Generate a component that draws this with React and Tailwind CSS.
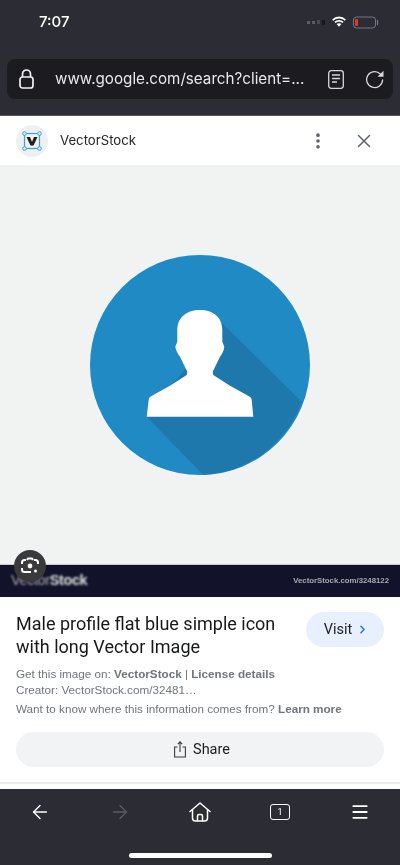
import { ArrowLeft, ArrowRight, ChevronRight, Menu, MoreVertical, X } from "lucide-react";

function BatteryIcon() {
  return (
    <svg width="26" height="13" viewBox="0 0 26 13" fill="none">
      <rect x="0.5" y="1" width="22" height="11" rx="3" stroke="#77777c" />
      <rect x="2" y="3" width="3" height="7" rx="1" fill="#e8352c" />
      <path d="M24.5 4.500v4" stroke="#77777c" strokeWidth="1.200" strokeLinecap="round" />
    </svg>
  );
}

function WifiIcon() {
  return (
    <svg width="16" height="12" viewBox="0 0 16 12" fill="white">
      <path d="M8 2.400c2.200 0 4.200.9 5.700 2.300l1.200-1.300A10 10 0 0 0 8 .6a10 10 0 0 0-6.900 2.800l1.200 1.300A8.200 8.200 0 0 1 8 2.400z" />
      <path d="M8 5.700c1.300 0 2.500.5 3.400 1.300l1.200-1.300A6.700 6.700 0 0 0 8 3.900a6.700 6.700 0 0 0-4.600 1.800L4.600 7c.9-.8 2.100-1.300 3.400-1.300z" />
      <path d="M8 7.200c-1 0-1.800.4-2.400.9L8 10.800l2.400-2.700c-.6-.5-1.400-.9-2.400-.9z" />
    </svg>
  );
}

function LockIcon() {
  return (
    <svg width="15" height="20" viewBox="0 0 15 20" fill="none" stroke="#f0f0f0" strokeWidth="1.700">
      <rect x="1" y="8" width="13" height="11" rx="2.500" />
      <path d="M3.500 8V5a4 4 0 0 1 8 0v3" />
    </svg>
  );
}

function ReaderIcon() {
  return (
    <svg width="16" height="19" viewBox="0 0 16 19" fill="none" stroke="#d8d8da" strokeWidth="1.300">
      <rect x="0.7" y="0.7" width="14.600" height="17.600" rx="2.500" />
      <path d="M4 5h8M4 8.500h8M4 12h5" />
    </svg>
  );
}

function ReloadIcon() {
  return (
    <svg width="20" height="19" viewBox="0 0 20 19" fill="none">
      <path d="M15.500 4.200A8 8 0 1 0 17.600 10" stroke="#d8d8da" strokeWidth="1.300" strokeLinecap="round" />
      <path d="M18.500 0.800v6h-6z" fill="#d8d8da" />
    </svg>
  );
}

function VectorStockLogo() {
  return (
    <svg width="32" height="32" viewBox="0 0 32 32" fill="none">
      <circle cx="16" cy="16" r="16" fill="#eef1f1" />
      <rect x="8.500" y="8.500" width="15" height="15" stroke="#3aa0d8" strokeWidth="1.200" />
      <path d="M10.500 12h3.500l2 5 2-5h3.500l-4 8.500h-3z" fill="#1c1c1c" />
      {[[8.5, 8.5], [23.5, 8.5], [8.5, 23.5], [23.5, 23.5]].map(([x, y]) => (
        <circle key={`${x}-${y}`} cx={x} cy={y} r="1.800" fill="#dff0fa" stroke="#3aa0d8" strokeWidth="1" />
      ))}
    </svg>
  );
}

function ProfileImage() {
  return (
    <svg width="220" height="220" viewBox="0 0 220 220">
      <circle cx="110" cy="110" r="110" fill="#1f8ac4" />
      <path d="M132 68L211.700 146.700A110 110 0 0 1 113.300 219.900L56.700 161.700Z" fill="#1f78ab" />
      <path
        d="M110 55C97 55 87.300 62 87.300 75L87.300 86.700L85.300 91.700C86 96 88 99 90 101.700L97.300 116.700L96.700 120L80 130.700L63.300 140C60 141.500 58.700 143 58.700 145L56.700 161.700L163.300 161.700L161.700 145C161.700 143 160 141.500 156.700 140L140 130.700L123.300 120L122.700 116.700L130 101.700C132 99 134 96 134.300 91.700L132.300 86.700L132.300 75C132.300 62 123 55 110 55Z"
        fill="white"
      />
    </svg>
  );
}

function LensIcon() {
  return (
    <svg width="20" height="20" viewBox="0 0 20 20" fill="none">
      <path d="M6 4H4.500A2.500 2.500 0 0 0 2 6.500V8M14 4h1.500A2.500 2.500 0 0 1 18 6.500V8M2 12v1.500A2.500 2.500 0 0 0 4.500 16H11" stroke="white" strokeWidth="2" />
      <path d="M7 4l1-1.500h4L13 4" stroke="white" strokeWidth="2" />
      <circle cx="10" cy="10" r="2.400" fill="white" />
      <circle cx="15.500" cy="15" r="1.500" fill="white" />
    </svg>
  );
}

function ShareIcon() {
  return (
    <svg width="12" height="17" viewBox="0 0 12 17" fill="none" stroke="#3a3b3e" strokeWidth="1.100">
      <path d="M3.500 6H.6v10h10.800V6H8.500" />
      <path d="M6 11V1M3.800 3.200L6 .8l2.200 2.400" />
    </svg>
  );
}

function HomeIcon() {
  return (
    <svg width="22" height="20" viewBox="0 0 22 20" fill="none" stroke="white" strokeWidth="1.500" strokeLinejoin="round">
      <path d="M1 9.500L11 1l10 8.500" strokeLinecap="round" />
      <path d="M3.500 7.500V16a3 3 0 0 0 3 3h9a3 3 0 0 0 3-3V7.500" />
      <path d="M8.500 19v-5a1.500 1.500 0 0 1 1.500-1.500h2a1.500 1.500 0 0 1 1.500 1.500v5" />
    </svg>
  );
}

export default function App() {
  return (
    <div className="flex h-[865px] w-[400px] flex-col overflow-hidden bg-white font-['Roboto',sans-serif] blur-[0.3px]">
      {/* browser chrome */}
      <div className="h-[116px] shrink-0 border-b border-[#55555b] bg-[#2c2c34] px-[7px]">
        <div className="flex h-[44px] items-center pl-[32px] pr-[14px]">
          <span className="font-['Inter',sans-serif] text-[15px] font-medium text-white">7:07</span>
          <div className="ml-auto flex items-center">
            <div className="mr-[6px] flex items-center gap-[2px]">
              <span className="h-[3px] w-[3px] bg-[#5b5b62]" />
              <span className="h-[3px] w-[3px] bg-[#5b5b62]" />
              <span className="h-[4px] w-[3px] bg-[#4a4a50]" />
              <span className="h-[5px] w-[3px] bg-[#18181c]" />
            </div>
            <WifiIcon />
            <div className="ml-[6px]">
              <BatteryIcon />
            </div>
          </div>
        </div>
        <div className="mt-[15px] flex h-[40px] items-center rounded-lg bg-[#1c1c20] pl-[12px] pr-[8px]">
          <LockIcon />
          <span className="ml-[21px] w-[258px] truncate font-['Inter',sans-serif] text-[15.200px] text-[#e8e8ea]">
            www.google.com/search?client=...
          </span>
          <div className="ml-auto flex items-center gap-[21px]">
            <ReaderIcon />
            <ReloadIcon />
          </div>
        </div>
      </div>

      {/* source header */}
      <div className="flex h-[49px] shrink-0 items-center bg-white pl-[16px] pr-[25px]">
        <VectorStockLogo />
        <span className="ml-[12px] font-['Inter',sans-serif] text-[13.200px] font-normal text-[#26272a]">VectorStock</span>
        <MoreVertical size={20} color="#5f6368" strokeWidth={2.400} className="ml-auto" />
        <X size={22} color="#5f6368" strokeWidth={1.600} className="ml-[25px]" />
      </div>

      {/* image */}
      <div className="relative flex h-[432px] shrink-0 flex-col">
        <div className="flex h-[400px] items-start justify-center border-b border-[#c9cbcb] bg-[#f1f3f3] pt-[90px]">
          <ProfileImage />
        </div>
        <div className="flex flex-1 items-center justify-between bg-[#12132b] pl-[11px] pr-[11px]">
          <span className="font-['Liberation_Sans',sans-serif] text-[14.500px] tracking-[-0.4px] text-[#a8a8ac] blur-[0.8px]">
            Vector<b className="text-[#dcdcdc]">Stock</b>
          </span>
          <span className="font-['Liberation_Sans',sans-serif] text-[7.800px] font-bold text-[#a8a8b0] blur-[0.7px]">
            VectorStock.com/3248122
          </span>
        </div>
        <div className="absolute left-[14px] top-[385px] flex h-[32px] w-[32px] items-center justify-center rounded-full bg-[#3a3a3c]">
          <LensIcon />
        </div>
      </div>

      {/* details */}
      <div className="flex flex-1 flex-col px-[16px]">
        <div className="mt-[15px] flex items-start justify-between">
          <h1 className="w-[270px] text-[18px] leading-[23px] font-normal text-[#17181a]">
            Male profile flat blue simple icon with long Vector Image
          </h1>
          <div className="flex h-[35px] w-[78px] items-center justify-center gap-[4px] rounded-full bg-[#e8f0fe] pl-[3px] text-[14.500px] font-normal text-[#202124]">
            Visit
            <ChevronRight size={13} color="#1a73e8" strokeWidth={2.500} />
          </div>
        </div>
        <div className="mt-[8px] font-['Liberation_Sans',sans-serif] text-[11.700px] leading-[16px] text-[#70757a]">
          <p>
            Get this image on: <b>VectorStock</b> | <b>License details</b>
          </p>
          <p>Creator: VectorStock.com/32481…</p>
          <p className="mt-[3px]">
            Want to know where this information comes from? <b>Learn more</b>
          </p>
        </div>
        <div className="mt-[15px] flex h-[35px] items-center justify-center gap-[7px] rounded-full bg-[#f1f3f4] pl-[4px] text-[14.500px] font-normal text-[#202124]">
          <ShareIcon />
          Share
        </div>
      </div>
      <div className="h-[2px] shrink-0 bg-[#ececec]" />
      <div className="h-[5px] shrink-0 bg-white" />

      {/* toolbar */}
      <div className="h-[76px] shrink-0 bg-[#2c2c34]">
        <div className="grid h-[46px] grid-cols-5 items-center">
          <div className="flex justify-center">
            <ArrowLeft size={22} color="white" strokeWidth={1.500} />
          </div>
          <div className="flex justify-center">
            <ArrowRight size={22} color="#5a5a60" strokeWidth={1.500} />
          </div>
          <div className="flex justify-center">
            <HomeIcon />
          </div>
          <div className="flex justify-center">
            <div className="flex h-[16px] w-[20px] items-center justify-center rounded-[3px] border-[1.500px] border-white text-[9px] leading-none text-white">
              1
            </div>
          </div>
          <div className="flex justify-center">
            <Menu size={20} color="white" strokeWidth={2.200} />
          </div>
        </div>
        <div className="mx-auto mt-[18px] h-[5px] w-[143px] rounded-full bg-white" />
      </div>
    </div>
  );
}
